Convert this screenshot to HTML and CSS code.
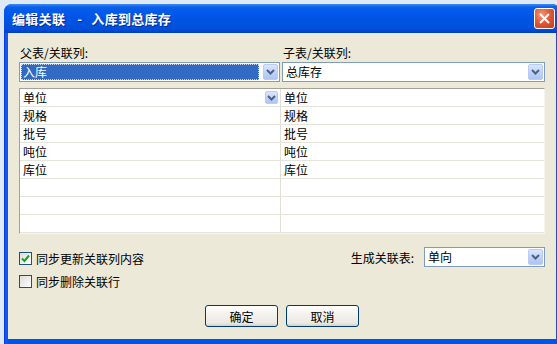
FILE: index.html
```html
<!DOCTYPE html>
<html lang="zh-CN">
<head>
  <meta charset="UTF-8">
  <title>编辑关联</title>
  <link rel="stylesheet" href="styles.css">
</head>
<body>
  <div class="window">
    <div class="titlebar">
      <span class="title">编辑关联<span class="dash">-</span>入库到总库存</span>
      <button class="close" type="button">
        <svg width="11" height="11" viewBox="0 0 11 11"><path d="M1 1L10 10M10 1L1 10" stroke="#fff" stroke-width="2"/></svg>
      </button>
    </div>

    <div class="client">
      <div class="pickers">
        <div class="picker">
          <label class="caption">父表/关联列:</label>
          <div class="combo">
            <span class="combo-text selected">入库</span>
            <span class="drop"><svg width="9" height="6" viewBox="0 0 9 6"><path d="M1 1L4.5 4.5L8 1" fill="none" stroke="#4d6185" stroke-width="2"/></svg></span>
          </div>
        </div>
        <div class="picker">
          <label class="caption">子表/关联列:</label>
          <div class="combo">
            <span class="combo-text">总库存</span>
            <span class="drop"><svg width="9" height="6" viewBox="0 0 9 6"><path d="M1 1L4.5 4.5L8 1" fill="none" stroke="#4d6185" stroke-width="2"/></svg></span>
          </div>
        </div>
      </div>

      <div class="grid">
        <div class="row">
          <div class="cell">单位<span class="drop small"><svg width="9" height="6" viewBox="0 0 9 6"><path d="M1 1L4.5 4.5L8 1" fill="none" stroke="#4d6185" stroke-width="2"/></svg></span></div>
          <div class="cell">单位</div>
        </div>
        <div class="row"><div class="cell">规格</div><div class="cell">规格</div></div>
        <div class="row"><div class="cell">批号</div><div class="cell">批号</div></div>
        <div class="row"><div class="cell">吨位</div><div class="cell">吨位</div></div>
        <div class="row"><div class="cell">库位</div><div class="cell">库位</div></div>
        <div class="row"><div class="cell"></div><div class="cell"></div></div>
        <div class="row"><div class="cell"></div><div class="cell"></div></div>
        <div class="row"><div class="cell"></div><div class="cell"></div></div>
      </div>

      <div class="options">
        <div class="opt-line">
          <label class="check first">
            <span class="box"><svg width="9" height="9" viewBox="0 0 9 9"><path d="M1 4.5L3.5 7L8 1.5" fill="none" stroke="#21a121" stroke-width="2"/></svg></span>
            同步更新关联列内容
          </label>
          <div class="gen">
            <span>生成关联表:</span>
            <div class="combo narrow">
              <span class="combo-text">单向</span>
              <span class="drop"><svg width="9" height="6" viewBox="0 0 9 6"><path d="M1 1L4.5 4.5L8 1" fill="none" stroke="#4d6185" stroke-width="2"/></svg></span>
            </div>
          </div>
        </div>
        <label class="check second">
          <span class="box"></span>
          同步删除关联行
        </label>
      </div>

      <div class="actions">
        <button class="btn" type="button">确定</button>
        <button class="btn" type="button">取消</button>
      </div>
    </div>
  </div>
</body>
</html>
```

FILE: styles.css
```css
body {
  margin: 0;
  width: 557px;
  height: 344px;
  overflow: hidden;
  background: #dfe8f6;
  font-family: "Noto Sans CJK SC", "DejaVu Sans", sans-serif;
  font-size: 12px;
  color: #000;
}

.window {
  margin: 4px 0 0 4px;
  width: 556px;
  height: 340px;
  box-sizing: border-box;
  padding-bottom: 5px;
  background: linear-gradient(90deg, #0831d9 0, #1660f0 2px, #0055e5 4px);
  border-radius: 8px 8px 0 0;
  display: flex;
  flex-direction: column;
}

.titlebar {
  height: 29px;
  display: flex;
  align-items: center;
  padding-left: 8px;
  border-radius: 8px 8px 0 0;
  background: linear-gradient(#3c8cf8 0, #0a5fe8 3px, #0058ea 10px, #0054e3 50%, #0050dc 85%, #003ec0 100%);
}

.title {
  color: #fff;
  font-weight: bold;
  font-size: 13px;
  letter-spacing: 0.3px;
  text-shadow: 1px 1px 0 #0b2b8a;
}

.dash {
  margin: 0 9px 0 12px;
}

.close {
  margin-left: auto;
  margin-right: 5px;
  width: 21px;
  height: 21px;
  padding: 0;
  border: 1px solid #fff;
  border-radius: 3px;
  background: radial-gradient(circle at 35% 30%, #f29b7c 0, #e0593a 45%, #c53d14 100%);
  display: flex;
  align-items: center;
  justify-content: center;
}

.client {
  flex: 1;
  margin: 0 4px;
  background: #ece9d8;
  padding: 12px 11px 0 11px;
}

.pickers {
  display: grid;
  grid-template-columns: 261px 263px;
  gap: 2px;
}

.caption {
  display: block;
  line-height: 15px;
  margin-bottom: 2px;
  padding-left: 1px;
}

.combo {
  height: 20px;
  box-sizing: border-box;
  border: 1px solid #7f9db9;
  background: #fff;
  display: flex;
  align-items: center;
}

.combo-text {
  flex: 1;
  padding-left: 3px;
  line-height: 16px;
}

.combo-text.selected {
  background: #316ac5;
  color: #fff;
  margin: 0 4px 0 1px;
  padding-left: 2px;
  outline: 1px dotted #c8d4ea;
  outline-offset: -1px;
}

.drop {
  width: 15px;
  height: 16px;
  margin-right: 1px;
  box-sizing: border-box;
  border: 1px solid #b9cbf3;
  border-radius: 2px;
  background: linear-gradient(#dbe6fd, #bccff7 60%, #aec4f4);
  display: flex;
  align-items: center;
  justify-content: center;
}

.drop.small {
  width: 13px;
  height: 13px;
  margin-left: auto;
}

.grid {
  margin-top: 6px;
  border: 1px solid;
  border-color: #a3a19a #f5f4ef #f5f4ef #a3a19a;
  background: #fff;
}

.row {
  display: grid;
  grid-template-columns: 261px 1fr;
  border-bottom: 1px solid #e6e3db;
}

.cell {
  height: 17px;
  line-height: 16px;
  padding-left: 3px;
  display: flex;
  align-items: center;
}

.cell:first-child {
  border-right: 1px solid #e2dfd6;
  padding-right: 1px;
}

.options {
  margin-top: 13px;
}

.opt-line {
  display: flex;
  justify-content: space-between;
  align-items: center;
  height: 20px;
}

.check {
  display: flex;
  align-items: center;
  gap: 4px;
  height: 13px;
  line-height: 13px;
}

.check.first {
  margin-top: 3px;
}

.check.second {
  margin-top: 8px;
}

.box {
  width: 13px;
  height: 13px;
  box-sizing: border-box;
  border: 1px solid #1c5180;
  background: linear-gradient(135deg, #dcdcd7, #fff);
  display: flex;
  align-items: center;
  justify-content: center;
}

.gen {
  display: flex;
  align-items: center;
  gap: 10px;
}

.combo.narrow {
  width: 121px;
}

.actions {
  margin-top: 17px;
  display: flex;
  justify-content: center;
  gap: 8px;
}

.btn {
  width: 73px;
  height: 22px;
  padding: 0;
  border: 1px solid #003c74;
  border-radius: 3px;
  background: linear-gradient(#fff, #f3f2ee 40%, #ebe9e2 85%, #d6d0c5);
  font-family: "Noto Sans CJK SC", "DejaVu Sans", sans-serif;
  font-size: 12px;
  color: #000;
}
```
